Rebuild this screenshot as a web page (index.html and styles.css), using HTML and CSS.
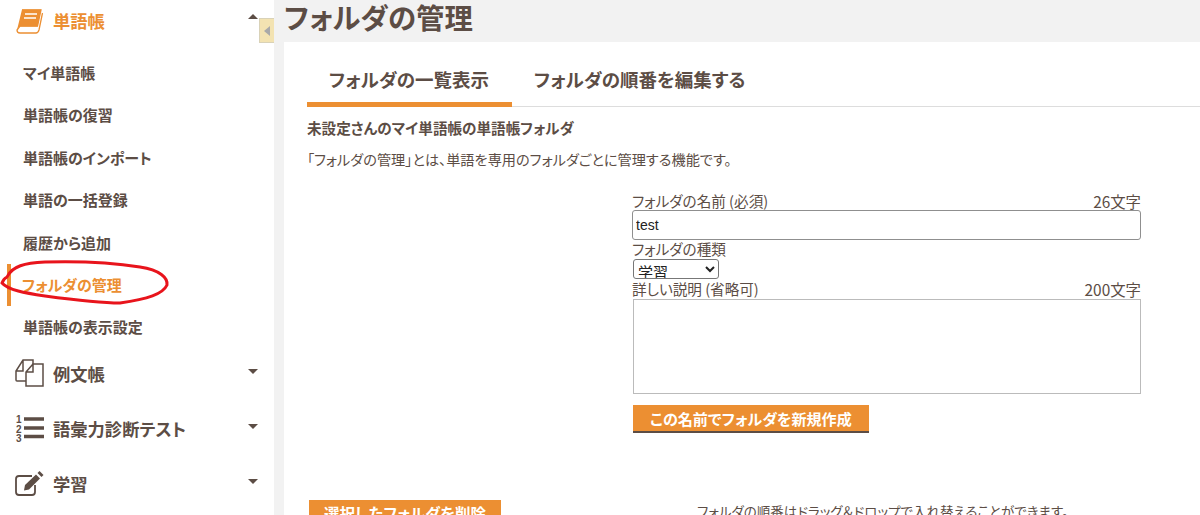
FILE: index.html
```html
<!DOCTYPE html>
<html lang="ja">
<head>
<meta charset="utf-8">
<title>フォルダの管理</title>
<link rel="stylesheet" href="styles.css">
</head>
<body>
<div class="page">
  <aside class="sidebar">
    <div class="group-head active">
      <svg class="gicon" viewBox="0 0 30 30"><path d="M8 5H27L23.500 21H6L3 25Q3 28 6 28H22Q24 28 25 25L28.500 8" fill="none" stroke="#ec8f32" stroke-width="1.300"/><path d="M8 4.500H27L23.500 21.500H6Q4 22 3.500 24L3 25Z" fill="#ec8f32"/><path d="M11 9H23M10 13H22" stroke="#fff" stroke-width="1.600"/></svg>
      <span class="gtext">単語帳</span><span class="caret up"></span>
    </div>
    <ul class="subnav">
      <li>マイ単語帳</li>
      <li>単語帳の復習</li>
      <li>単語帳のインポート</li>
      <li>単語の一括登録</li>
      <li>履歴から追加</li>
      <li class="current">フォルダの管理</li>
      <li>単語帳の表示設定</li>
    </ul>
    <div class="group-head">
      <svg class="gicon" viewBox="0 0 30 30"><path d="M12 23H3Q2 23 2 22V13L9 2H19V7M9 2V13H2" fill="none" stroke="#5c4d45" stroke-width="1.500"/><path d="M12 27V14L19 6H29V28H12ZM19 6V14H12" fill="#fff" stroke="#5c4d45" stroke-width="1.500"/></svg>
      <span class="gtext">例文帳</span><span class="caret"></span>
    </div>
    <div class="group-head">
      <svg class="gicon" viewBox="0 0 30 30"><text x="2" y="10" class="num">1</text><text x="2" y="19.500" class="num">2</text><text x="2" y="29" class="num">3</text><path d="M10 6H30M10 15H30M10 23.500H30" stroke="#5c4d45" stroke-width="3.300"/></svg>
      <span class="gtext">語彙力診断テスト</span><span class="caret"></span>
    </div>
    <div class="group-head">
      <svg class="gicon" viewBox="0 0 30 30"><path d="M21 17V24Q21 27 18 27H5Q2 27 2 24V11Q2 8 5 8H18" fill="none" stroke="#5c4d45" stroke-width="1.800"/><path d="M11 17L22 6.500L26 10.500L15 21.500L10 22.500Z" fill="#5c4d45"/><path d="M23.500 5L25.500 3L29.500 7L27.500 9Z" fill="#5c4d45"/></svg>
      <span class="gtext">学習</span><span class="caret"></span>
    </div>
    <div class="collapse"><span></span></div>
    <svg class="scribble" viewBox="0 0 170 60"><path d="M7 27C12 16 25 13 45 12C80 11 115 13 140 17C160 20 168 28 167 35C163 44 148 49 120 53C100 53 75 50 45 46C25 43 8 40 2 33C3 30 5 28 7 27Z" fill="none" stroke="#e8141c" stroke-width="3"/></svg>
  </aside>
  <main class="main">
    <h1 class="title">フォルダの管理</h1>
    <section class="panel">
      <nav class="tabs">
        <div class="tab selected">フォルダの一覧表示</div>
        <div class="tab">フォルダの順番を編集する</div>
      </nav>
      <h2 class="subhead">未設定さんのマイ単語帳の単語帳フォルダ</h2>
      <p class="desc">「フォルダの管理」とは、単語を専用のフォルダごとに管理する機能です。</p>
      <form class="form">
        <div class="lrow"><span>フォルダの名前 (必須)</span><span class="count">26文字</span></div>
        <input class="name" type="text" value="test">
        <div class="lrow"><span>フォルダの種類</span></div>
        <select class="kind"><option>学習</option></select>
        <div class="lrow"><span>詳しい説明 (省略可)</span><span class="count">200文字</span></div>
        <textarea class="detail"></textarea>
        <button type="button" class="btn create">この名前でフォルダを新規作成</button>
      </form>
      <div class="bottom">
        <button type="button" class="btn del">選択したフォルダを削除</button>
        <p class="note">フォルダの順番はドラッグ＆ドロップで入れ替えることができます。</p>
      </div>
    </section>
  </main>
</div>
</body>
</html>
```
FILE: styles.css
```css
* { box-sizing: border-box; }
html, body { margin: 0; padding: 0; height: 515px; overflow: hidden; }
body {
  background: #fff;
  color: #5c4d45;
  font-family: "Noto Sans CJK JP", "Noto Sans", sans-serif;
  font-feature-settings: "palt";
}
.page { display: flex; height: 515px; overflow: hidden; }
.sidebar { position: relative; width: 274px; flex: none; background: #fff; }
.group-head {
  display: flex; align-items: center; height: 55px; padding: 0 16px 0 14px;
  font-size: 17.3px; font-weight: 700;
}
.group-head:first-child { height: 40px; margin-bottom: 12px; }
.group-head.active { color: #ec8f32; }
.gicon { width: 30px; height: 30px; flex: none; margin-right: 9px; overflow: visible; }
.num { font-size: 10px; font-weight: 700; font-family: "Liberation Sans", sans-serif; fill: #5c4d45; }
.gtext { flex: 1; }
.caret { width: 0; height: 0; border-left: 5px solid transparent; border-right: 5px solid transparent; border-top: 5px solid #5c4d45; margin-top: -3px; }
.caret.up { border-top: 0; border-bottom: 5px solid #5c4d45; margin-top: -8px; }
.subnav { list-style: none; margin: 0 0 -3px; padding: 0 0 0 7px; }
.subnav li {
  height: 42.4px; line-height: 42px; padding-left: 16px;
  font-size: 15px; font-weight: 700;
}
.subnav li.current { color: #ec8f32; border-left: 4px solid #ec8f32; padding-left: 11px; }
.collapse {
  position: absolute; left: 259px; top: 18px; width: 15px; height: 25px;
  background: #f3e3b2; border: 1px solid #d9d2b8; border-right: 0;
  display: flex; align-items: center; justify-content: center;
}
.collapse span { width: 0; height: 0; border-top: 5px solid transparent; border-bottom: 5px solid transparent; border-right: 6px solid #a9a9a9; }
.scribble { position: absolute; left: 0; top: 250px; width: 170px; height: 60px; }
.main { flex: 1; min-width: 0; background: #f2f2f2; padding-left: 10px; }
.title { margin: 0; height: 42px; line-height: 34px; font-size: 28.4px; font-weight: 700; color: #5c4d45; white-space: nowrap; }
.panel { background: #fff; height: 473px; padding: 22px 0 0 23px; }
.tabs { display: flex; border-bottom: 1px solid #ddd; height: 43px; }
.tab { height: 43px; line-height: 31px; font-size: 18.5px; font-weight: 700; padding: 0 22px; white-space: nowrap; }
.tab.selected { border-bottom: 5px solid #ec8f32; width: 205px; padding: 0 0 0 22px; }
.subhead { margin: 11px 0 0; font-size: 14.6px; line-height: 20px; font-weight: 700; }
.desc { margin: 11px 0 0; font-size: 14.2px; line-height: 20px; }
.form { width: 509px; margin: 23px 0 0 325px; display: flex; flex-direction: column; align-items: flex-start; }
.lrow { display: flex; justify-content: space-between; width: 100%; font-size: 14.6px; line-height: 18px; height: 17px; }
.count { font-size: 15.4px; }
.name { width: 509px; height: 30px; margin: 1px 0 0; padding: 0 3px; font: 14px "Liberation Sans", sans-serif; color: #222; border: 1px solid #8f8f8f; border-radius: 3px; background: #fff; }
.kind { width: 86px; height: 20px; margin: 2px 0 1px 1px; padding: 0; font-size: 15px; font-family: inherit; color: #222; background: #fff; border: 1px solid #777; border-radius: 3px; }
.detail { width: 508px; height: 95px; margin: 2px 0 0 1px; border: 1px solid #bbb; resize: none; display: block; background: #fff; }
.btn { border: 0; border-bottom: 2px solid #5c4d45; background: #ec8f32; color: #fff; font-family: inherit; font-feature-settings: "palt"; font-weight: 700; padding: 0; white-space: nowrap; }
.create { width: 236px; height: 28px; margin: 11px 0 0 1px; font-size: 15.1px; }
.bottom { display: flex; align-items: flex-start; margin: 67px 0 0 2px; }
.del { width: 192px; height: 28px; flex: none; font-size: 15.5px; }
.note { margin: 2px 0 0 196px; font-size: 13.5px; line-height: 18px; white-space: nowrap; }
```
